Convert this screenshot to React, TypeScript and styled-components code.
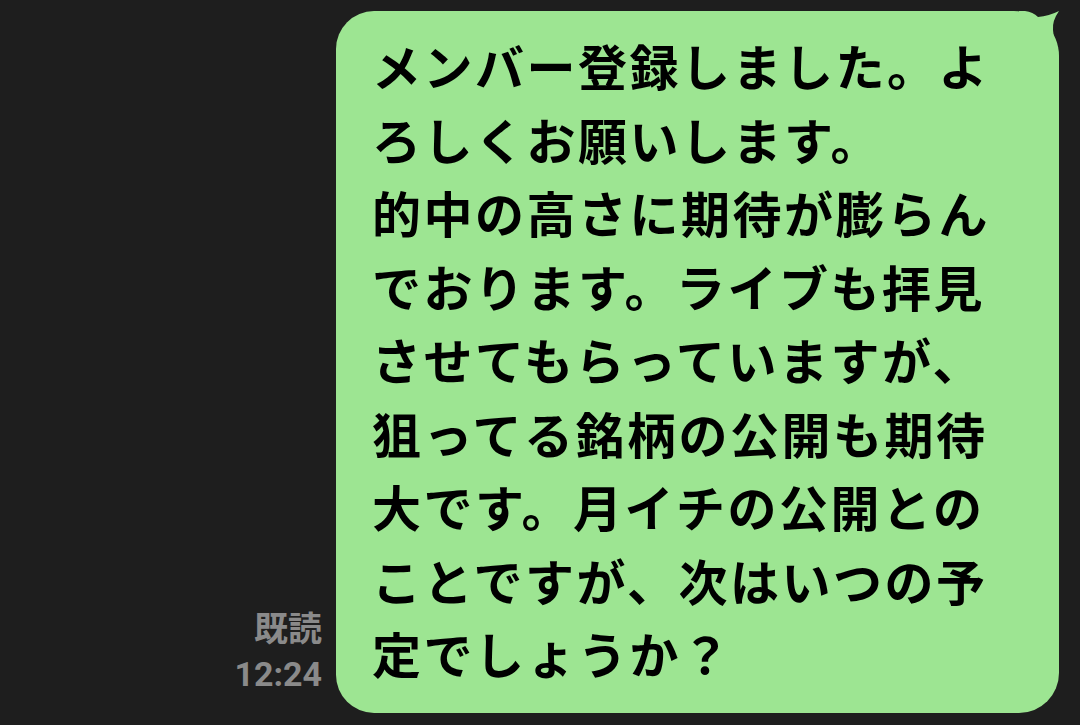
import React from "react";
import styled, { createGlobalStyle } from "styled-components";

const GlobalStyle = createGlobalStyle`
  html, body {
    margin: 0;
    padding: 0;
    background: #1e1e1e;
  }
  body {
    width: 1080px;
    height: 725px;
    overflow: hidden;
  }
`;

const Screen = styled.div`
  display: flex;
  justify-content: flex-end;
  align-items: flex-end;
  gap: 14px;
  box-sizing: border-box;
  height: 725px;
  padding: 11px 21px 12px 0;
`;

const Meta = styled.div`
  display: flex;
  flex-direction: column;
  align-items: flex-end;
  padding-bottom: 16px;
  color: #8a8a8a;
  font-family: Roboto, "Noto Sans CJK JP", sans-serif;
  font-weight: 700;
  font-size: 34px;
  line-height: 45px;
`;

const Bubble = styled.div`
  position: relative;
  box-sizing: border-box;
  width: 723px;
  padding: 17px 16px 23.5px 36px;
  background: #9de592;
  border-radius: 38px 45px 40px 38px;
  color: #000;
  font-family: "Noto Sans CJK JP", sans-serif;
  font-weight: 700;
  font-size: 49px;
  letter-spacing: 2.5px;
  line-height: 73.5px;
  white-space: nowrap;
`;

const Tail = styled.svg`
  position: absolute;
  top: 0;
  right: 0;
  width: 40px;
  height: 50px;
`;

const lines = [
  "メンバー登録しました。よ",
  "ろしくお願いします。",
  "的中の高さに期待が膨らん",
  "でおります。ライブも拝見",
  "させてもらっていますが、",
  "狙ってる銘柄の公開も期待",
  "大です。月イチの公開との",
  "ことですが、次はいつの予",
  "定でしょうか？",
];

export default function App() {
  return (
    <>
      <GlobalStyle />
      <Screen>
        <Meta>
          <span>既読</span>
          <span>12:24</span>
        </Meta>
        <Bubble>
          <Tail viewBox="0 0 40 50">
            <path
              d="M0 0 L6 0 Q14 1 19 6 Q30 5 40 0 Q33 10 34 19 Q35 32 40 46 L40 50 L0 50 Z"
              fill="#9de592"
            />
          </Tail>
          {lines.map((l, i) => (
            <div key={i}>{l}</div>
          ))}
        </Bubble>
      </Screen>
    </>
  );
}
